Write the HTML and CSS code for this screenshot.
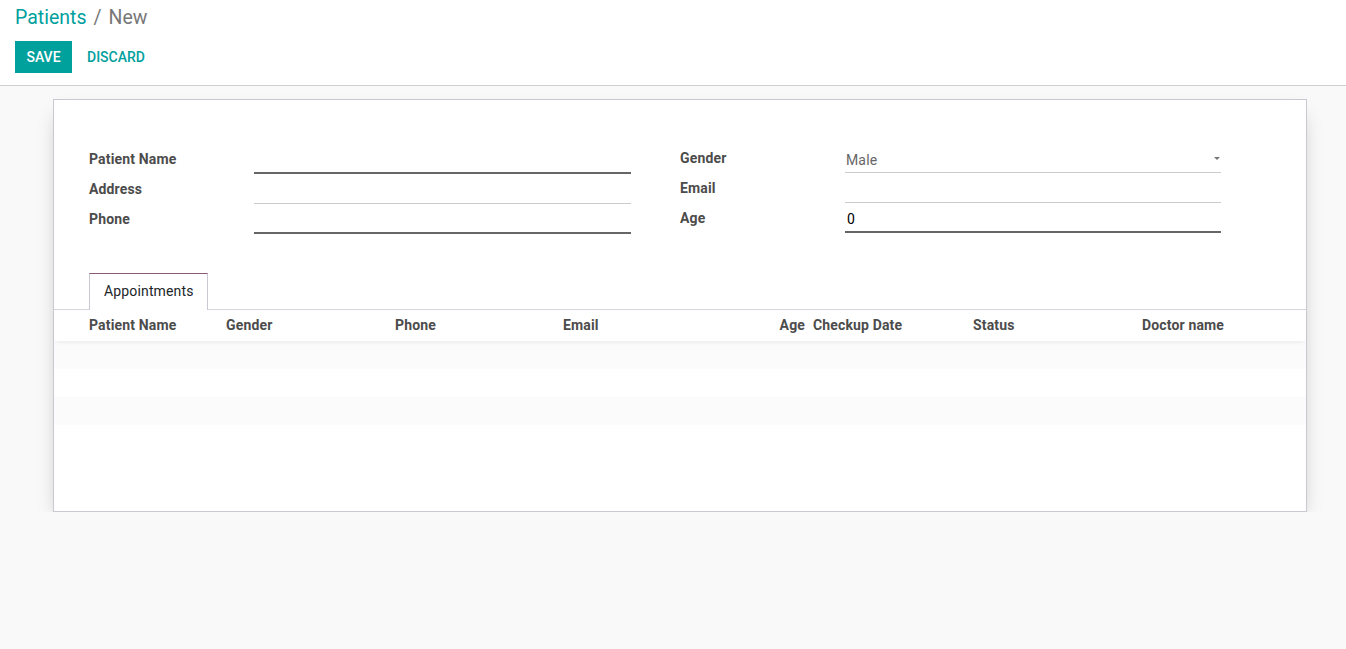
FILE: index.html
```html
<!DOCTYPE html>
<html>
<head>
<meta charset="utf-8">
<link rel="stylesheet" href="styles.css">
</head>
<body>
<div class="control-panel">
  <div class="breadcrumb"><span class="bc-link">Patients</span><span class="bc-sep">/</span><span class="bc-active">New</span></div>
  <div class="buttons">
    <button class="btn btn-primary">SAVE</button>
    <button class="btn btn-link">DISCARD</button>
  </div>
</div>
<div class="content">
  <div class="sheet">
    <div class="groups">
      <div class="group">
        <div class="row"><label class="lbl">Patient Name</label><div class="field required"></div></div>
        <div class="row"><label class="lbl">Address</label><div class="field"></div></div>
        <div class="row"><label class="lbl">Phone</label><div class="field required"></div></div>
      </div>
      <div class="group right">
        <div class="row"><label class="lbl">Gender</label><div class="field select"><span class="val grey">Male</span><span class="caret"></span></div></div>
        <div class="row"><label class="lbl">Email</label><div class="field"></div></div>
        <div class="row"><label class="lbl">Age</label><div class="field required"><span class="val">0</span></div></div>
      </div>
    </div>
    <div class="tabs">
      <div class="tab">Appointments</div>
    </div>
    <div class="list">
      <div class="list-head">
        <div class="th">Patient Name</div>
        <div class="th">Gender</div>
        <div class="th">Phone</div>
        <div class="th">Email</div>
        <div class="th num">Age</div>
        <div class="th">Checkup Date</div>
        <div class="th">Status</div>
        <div class="th">Doctor name</div>
      </div>
      <div class="list-row odd"></div>
      <div class="list-row"></div>
      <div class="list-row odd"></div>
    </div>
  </div>
</div>
</body>
</html>
```
FILE: styles.css
```css
html, body {
  margin: 0;
  padding: 0;
  background: #f9f9f9;
  font-family: Roboto, "Noto Sans", sans-serif;
  font-size: 14px;
  letter-spacing: 0.15px;
  color: #4c4c4c;
}
.control-panel {
  background: #fff;
  border-bottom: 1px solid #cfcfcf;
  height: 86px;
  box-sizing: border-box;
  padding: 6px 15px 0 15px;
}
.breadcrumb {
  font-size: 19.5px;
  line-height: 24px;
  height: 24px;
  letter-spacing: 0;
}
.bc-link { color: #00a09d; }
.bc-sep { color: #777; margin: 0 7px; }
.bc-active { color: #777; }
.buttons {
  display: flex;
  margin-top: 11px;
}
.btn {
  font-family: Roboto, sans-serif;
  font-size: 14px;
  font-weight: 500;
  height: 32px;
  padding: 0 11px;
  border: none;
  line-height: 32px;
  cursor: pointer;
  letter-spacing: 0;
}
.btn-primary {
  background: #00a09d;
  color: #fff;
  width: 57px;
}
.btn-link {
  background: transparent;
  color: #00a09d;
  margin-left: 3px;
  padding: 0 12px;
}
.content {
  padding: 13px 0 0 53px;
}
.sheet {
  width: 1254px;
  height: 413px;
  box-sizing: border-box;
  background: #fff;
  border: 1px solid #c9c8d3;
  box-shadow: 0 10px 20px -8px rgba(0, 0, 0, 0.35);
  padding-top: 44px;
}
.groups {
  display: flex;
  padding-left: 35px;
  gap: 49px;
}
.group {
  width: 542px;
}
.group.right { width: 541px; }
.row {
  display: flex;
  height: 30px;
  align-items: flex-end;
}
.lbl {
  width: 165px;
  flex: none;
  font-weight: 700;
  color: #4c4c4c;
  align-self: stretch;
  line-height: 30px;
}
.group.right .row { margin-top: -1px; margin-bottom: 1px; }
.group.right .lbl { line-height: 30px; }
.field {
  flex: 1;
  height: 28px;
  border-bottom: 1px solid #ccc;
  display: flex;
  align-items: center;
  padding-left: 1px;
  box-sizing: border-box;
}
.field.required {
  border-bottom: 2px solid #666;
  height: 29px;
}
.val {
  font-size: 14px;
  color: #000;
  padding-top: 3px;
  padding-left: 1px;
}
.val.grey { color: #666; padding-left: 0; }
.select {
  justify-content: space-between;
}
.caret {
  width: 0;
  height: 0;
  border-left: 3px solid transparent;
  border-right: 3px solid transparent;
  border-top: 3px solid #777;
  margin-right: 1px;
  margin-top: 0;
}
.tabs {
  margin-top: 39px;
  border-bottom: 1px solid #d6d6de;
  padding-left: 35px;
  display: flex;
  height: 36px;
}
.tab {
  background: #fff;
  border: 1px solid #c9c8d3;
  border-top: 1px solid #875a7b;
  border-bottom: none;
  padding: 0 13px 0 14px;
  line-height: 35px;
  height: 37px;
  box-sizing: border-box;
  color: #212529;
  margin-bottom: -1px;
}
.list-head {
  display: grid;
  grid-template-columns: 137px 169px 168px 212px 38px 160px 169px 1fr;
  padding-left: 35px;
  height: 31px;
  line-height: 31px;
  font-weight: 700;
  color: #4c4c4c;
  box-shadow: 0 3px 5px -2px rgba(0, 0, 0, 0.08);
  position: relative;
}
.th.num {
  text-align: right;
  padding-right: 8px;
}
.list-row {
  height: 28px;
}
.list-row.odd {
  background: #fbfbfb;
}
```
